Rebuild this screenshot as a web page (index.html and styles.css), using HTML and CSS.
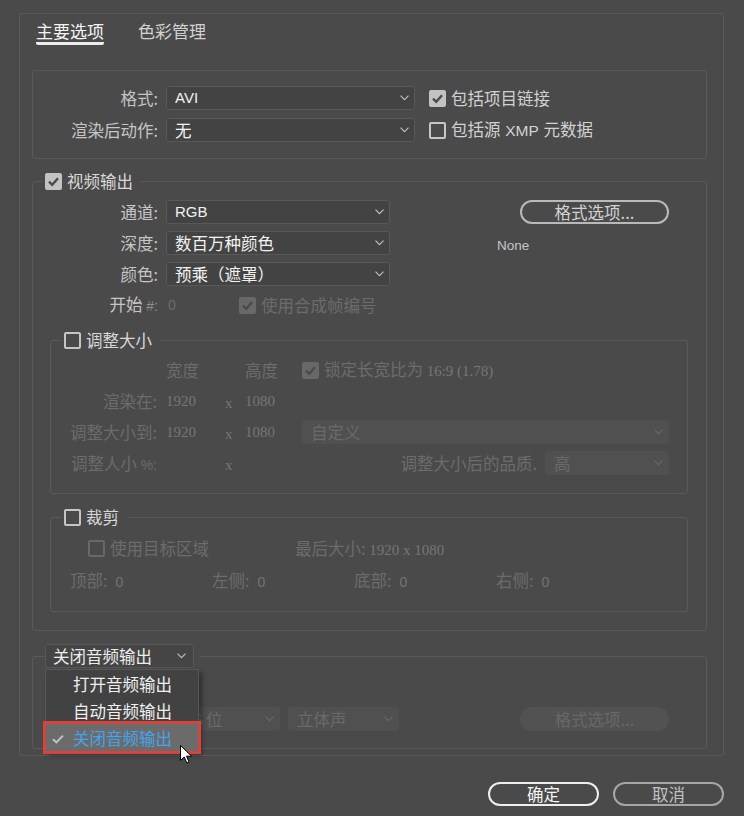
FILE: index.html
```html
<!DOCTYPE html>
<html lang="zh-CN">
<head>
<meta charset="utf-8">
<title>输出模块设置</title>
<link rel="stylesheet" href="styles.css">
</head>
<body>
<div class="page">
  <div class="frame">
    <div class="tabs">
      <div class="tab active">主要选项</div>
      <div class="tab">色彩管理</div>
    </div>

    <div class="section">
      <div class="row">
        <span class="label">格式:</span>
        <div class="select w249"><span class="txt lat">AVI</span><svg class="chev" viewBox="0 0 9 6"><path d="M0.5 0.6 L4.5 4.6 L8.5 0.6" fill="none" stroke="#bdbdbd" stroke-width="1.2"/></svg></div>
        <div class="check"><span class="cb on"><svg viewBox="0 0 17 17"><path d="M4 8.6 L7.2 11.8 L13 5.2" fill="none" stroke="#4a4a4a" stroke-width="2.4"/></svg></span>包括项目链接</div>
      </div>
      <div class="row">
        <span class="label">渲染后动作:</span>
        <div class="select w249"><span class="txt">无</span><svg class="chev" viewBox="0 0 9 6"><path d="M0.5 0.6 L4.5 4.6 L8.5 0.6" fill="none" stroke="#bdbdbd" stroke-width="1.2"/></svg></div>
        <div class="check"><span class="cb"></span><span>包括源 <span class="lat xmp">XMP</span> 元数据</span></div>
      </div>
    </div>

    <fieldset class="group video">
      <legend><span class="lg"><span class="cb on"><svg viewBox="0 0 17 17"><path d="M4 8.6 L7.2 11.8 L13 5.2" fill="none" stroke="#4a4a4a" stroke-width="2.4"/></svg></span>视频输出</span></legend>
      <div class="video-top">
        <div class="rows">
          <div class="row">
            <span class="label">通道:</span>
            <div class="select w224"><span class="txt lat">RGB</span><svg class="chev" viewBox="0 0 9 6"><path d="M0.5 0.6 L4.5 4.6 L8.5 0.6" fill="none" stroke="#bdbdbd" stroke-width="1.2"/></svg></div>
          </div>
          <div class="row">
            <span class="label">深度:</span>
            <div class="select w224"><span class="txt">数百万种颜色</span><svg class="chev" viewBox="0 0 9 6"><path d="M0.5 0.6 L4.5 4.6 L8.5 0.6" fill="none" stroke="#bdbdbd" stroke-width="1.2"/></svg></div>
          </div>
          <div class="row">
            <span class="label">颜色:</span>
            <div class="select w224"><span class="txt">预乘（遮罩）</span><svg class="chev" viewBox="0 0 9 6"><path d="M0.5 0.6 L4.5 4.6 L8.5 0.6" fill="none" stroke="#bdbdbd" stroke-width="1.2"/></svg></div>
          </div>
          <div class="row">
            <span class="label">开始 <span class="hash lat">#:</span></span>
            <span class="v0 lat dim">0</span>
            <div class="check dis"><span class="cb on dis"><svg viewBox="0 0 17 17"><path d="M4 8.6 L7.2 11.8 L13 5.2" fill="none" stroke="#4a4a4a" stroke-width="2.4"/></svg></span>使用合成帧编号</div>
          </div>
        </div>
        <div class="side">
          <div class="pill">格式选项...</div>
          <div class="none lat">None</div>
        </div>
      </div>

      <fieldset class="group resize">
        <legend><span class="lg"><span class="cb"></span>调整大小</span></legend>
        <div class="grid">
          <span></span><span class="c2 dim">宽度</span><span></span><span class="c4 dim">高度</span>
          <div class="c5 check dis first"><span class="cb on dis"><svg viewBox="0 0 17 17"><path d="M4 8.6 L7.2 11.8 L13 5.2" fill="none" stroke="#4a4a4a" stroke-width="2.4"/></svg></span><span>锁定长宽比为 <span class="num">16:9 (1.78)</span></span></div>

          <span class="glabel dim">渲染在:</span><span class="c2 num">1920</span><span class="c3 num">x</span><span class="c4 num">1080</span><span></span>

          <span class="glabel dim">调整大小到:</span><span class="c2 num">1920</span><span class="c3 num">x</span><span class="c4 num">1080</span>
          <div class="select dsel"><span class="txt">自定义</span><svg class="chev" viewBox="0 0 9 6"><path d="M0.5 0.6 L4.5 4.6 L8.5 0.6" fill="none" stroke="#686868" stroke-width="1.2"/></svg></div>

          <span class="glabel dim">调整人小 <span class="pct">%:</span></span><span></span><span class="c3 num">x</span><span></span>
          <div class="c5 qual"><span class="dim">调整大小后的品质.</span><div class="select dsel w124"><span class="txt">高</span><svg class="chev" viewBox="0 0 9 6"><path d="M0.5 0.6 L4.5 4.6 L8.5 0.6" fill="none" stroke="#686868" stroke-width="1.2"/></svg></div></div>
        </div>
      </fieldset>

      <fieldset class="group crop">
        <legend><span class="lg"><span class="cb"></span>裁剪</span></legend>
        <div class="crop-row1">
          <div class="check dis uta"><span class="cb dis"></span>使用目标区域</div>
          <span class="dim">最后大小: <span class="num">1920 x 1080</span></span>
        </div>
        <div class="crop-row2">
          <span class="dim">顶部:<span class="zero lat">0</span></span>
          <span class="dim">左侧:<span class="zero lat">0</span></span>
          <span class="dim">底部:<span class="zero lat">0</span></span>
          <span class="dim">右侧:<span class="zero lat">0</span></span>
        </div>
      </fieldset>
    </fieldset>

    <fieldset class="group audio">
      <legend class="alegend">
        <div class="select asel"><span class="txt">关闭音频输出</span><svg class="chev" viewBox="0 0 9 6"><path d="M0.5 0.6 L4.5 4.6 L8.5 0.6" fill="none" stroke="#bdbdbd" stroke-width="1.2"/></svg></div>
        <div class="menu">
          <div class="item">打开音频输出</div>
          <div class="item">自动音频输出</div>
          <div class="item sel"><svg class="mcheck" viewBox="0 0 12 10"><path d="M1 5.2 L4.4 8.4 L11 1.6" fill="none" stroke="#c4c4c4" stroke-width="2"/></svg>关闭音频输出</div>
          <svg class="cursor" viewBox="0 0 13 19"><path d="M0.5 0.5 L0.5 15.5 L4.2 12 L6.8 18 L9 17 L6.5 11.2 L11.6 11.2 Z" fill="#ffffff" stroke="#000000" stroke-width="1"/></svg>
        </div>
      </legend>
      <div class="arow">
        <div class="select dsel a1"><span class="txt lat">48.000 kHz</span></div>
        <div class="select dsel a2"><span class="txt"><span class="lat">16</span> 位</span><svg class="chev" viewBox="0 0 9 6"><path d="M0.5 0.6 L4.5 4.6 L8.5 0.6" fill="none" stroke="#686868" stroke-width="1.2"/></svg></div>
        <div class="select dsel a3"><span class="txt">立体声</span><svg class="chev" viewBox="0 0 9 6"><path d="M0.5 0.6 L4.5 4.6 L8.5 0.6" fill="none" stroke="#686868" stroke-width="1.2"/></svg></div>
        <div class="pill dpill">格式选项...</div>
      </div>
    </fieldset>
  </div>

  <div class="actions">
    <div class="btn primary">确定</div>
    <div class="btn">取消</div>
  </div>
</div>
</body>
</html>
```
FILE: styles.css
```css
* { box-sizing: border-box; }
html, body { margin: 0; padding: 0; }
body {
  background: #4a4a4a;
  font-family: "Noto Sans CJK SC", "Liberation Sans", sans-serif;
  font-size: 16.5px;
  color: #c9c9c9;
  width: 744px;
  height: 816px;
  overflow: hidden;
}
.lat { font-family: "Liberation Sans", "Noto Sans", sans-serif; }
.num { font-family: "Liberation Serif", serif; font-size: 15px; }

.page { padding: 13px 20px 0 19px; }
.frame {
  border: 1px solid #5a5a5a;
  border-radius: 3px;
  padding: 6px 16px 6px 12px;
}

/* tabs */
.tabs { display: flex; align-items: flex-start; gap: 34px; margin-left: 4px; }
.tab { font-size: 17px; line-height: 22px; color: #d2d2d2; }
.tab.active { color: #f4f4f4; border-bottom: 3px solid #ededed; border-radius: 0 0 2px 2px; }

/* section 1 */
.section {
  border: 1px solid #5a5a5a;
  border-radius: 3px;
  margin-top: 25px;
  padding: 15px 0 16px 0;
  display: flex;
  flex-direction: column;
  gap: 8px;
}
.row { display: flex; align-items: center; height: 24px; }
.label {
  width: 125px;
  flex: none;
  margin-right: 8px;
  text-align: right;
  white-space: nowrap;
  line-height: 24px;
  color: #c6c6c6;
}
.select {
  display: flex;
  align-items: center;
  height: 24px;
  flex: none;
  background: #434343;
  border: 1px solid #585858;
  border-radius: 3px;
  padding: 0 5px 0 8px;
  color: #f2f2f2;
  line-height: 22px;
}
.select .txt { flex: 1; white-space: nowrap; overflow: hidden; }
.select .txt.lat { font-size: 15px; }
.chev { width: 9px; height: 6px; flex: none; }
.w249 { width: 249px; }
.w224 { width: 224px; }
.w124 { width: 124px; }

.check { display: flex; align-items: center; gap: 5px; color: #d2d2d2; white-space: nowrap; line-height: 24px; }
.section .check { margin-left: 14px; }
.xmp { font-size: 15.5px; margin: 0 1px; }
.cb {
  width: 17px;
  height: 17px;
  flex: none;
  border: 2px solid #c6c6c6;
  border-radius: 2px;
  display: inline-block;
}
.cb.on { background: #c3c3c3; border-color: #c3c3c3; }
.cb svg { display: block; width: 17px; height: 17px; margin: -2px; }
.cb.dis { border-color: #686868; }
.cb.on.dis { background: #686868; }
.check.dis { color: #6c6c6c; }
.dim { color: #6c6c6c; }

/* fieldsets */
.group {
  margin: 0;
  min-width: 0;
  border: 1px solid #5a5a5a;
  border-radius: 3px;
}
.group > legend { padding: 0 8px 0 3px; height: 20px; }
.lg { display: flex; align-items: center; gap: 5px; height: 20px; line-height: 20px; color: #d8d8d8; }

.group.video { margin-top: 12px; padding: 9px 18px 18px 0; }
.video > legend { margin-left: 9px; }
.video-top { display: flex; align-items: flex-start; }
.rows { display: flex; flex-direction: column; gap: 7px; }
.hash { font-size: 14px; color: #8d8d97; }
.v0 { width: 73px; padding-left: 2px; font-size: 14px; flex: none; }
.side { margin-left: 107px; }
.pill {
  margin-left: 23px;
  width: 149px;
  height: 24px;
  border: 2px solid #b9b9b9;
  border-radius: 12px;
  text-align: center;
  line-height: 20px;
  color: #d2d2d2;
}
.none { margin-top: 15px; font-size: 13.5px; line-height: 14px; color: #c4c4c4; }

.group.resize { margin: 13px 0 0 17px; padding: 8px 18px 18px 0; }
.resize > legend, .crop > legend { margin-left: 10px; }
.grid {
  display: grid;
  grid-template-columns: 106px 59px 20px 66px 1fr;
  grid-auto-rows: 24px;
  row-gap: 7px;
  align-items: center;
  white-space: nowrap;
}
.num { color: #767676; }
.pct { font-family: "Liberation Sans", sans-serif; font-size: 14px; }
.glabel { text-align: right; }
.c2, .c3, .c4 { padding-left: 9px; }
.c3 { padding-top: 4px; }
.dsel { background: #505050; border-color: #505050; color: #6a6a6a; }
.qual { display: flex; align-items: center; justify-content: flex-end; gap: 8px; }

.group.crop { margin: 13px 0 0 17px; padding: 9px 18px 19px 0; }
.crop-row1 { display: flex; align-items: center; height: 24px; padding-left: 37px; }
.uta { width: 207px; flex: none; }
.crop-row2 {
  margin-top: 8px;
  display: grid;
  grid-template-columns: 142px 142px 142px 142px;
  height: 24px;
  align-items: center;
  padding-left: 19px;
}
.zero { margin-left: 8px; font-size: 14px; color: #747474; }

/* audio */
.group.audio { margin-top: 13px; padding: 39px 18px 17px 0; }
.audio > legend.alegend { margin-left: 12px; padding: 0 6px 0 0; height: 24px; position: relative; }
.asel { width: 149px; background: #454545; color: #ececec; padding-left: 7px; padding-right: 7px; }
.arow { display: flex; align-items: center; height: 24px; }
.a1 { margin-left: 12px; width: 120px; }
.a2 { margin-left: 10px; width: 105px; }
.a3 { margin-left: 8px; width: 111px; }
.dpill { margin-left: 121px; background: #525252; border-color: #525252; color: #686868; }

.menu {
  position: absolute;
  left: 0;
  top: 25px;
  width: 154px;
  background: #424242;
  border: 1px solid #575757;
  box-shadow: 3px 3px 5px rgba(0, 0, 0, 0.4);
  z-index: 5;
}
.item {
  position: relative;
  height: 27px;
  display: flex;
  align-items: center;
  padding-left: 27px;
  color: #efefef;
  white-space: nowrap;
}
.item.sel { background: #6b6b6b; color: #45a3ec; outline: 3px solid #d8443b; }
.mcheck { position: absolute; left: 6px; top: 10px; width: 12px; height: 10px; }
.cursor { position: absolute; left: 134px; top: 75px; width: 13px; height: 19px; z-index: 6; }

/* bottom buttons */
.actions { display: flex; justify-content: flex-end; gap: 14px; margin-top: 26px; }
.btn {
  width: 111px;
  height: 24px;
  border: 2px solid #a6a6a6;
  border-radius: 12px;
  text-align: center;
  line-height: 20px;
  color: #c2c2c2;
}
.btn.primary { border-color: #eeeeee; color: #f6f6f6; }
```
